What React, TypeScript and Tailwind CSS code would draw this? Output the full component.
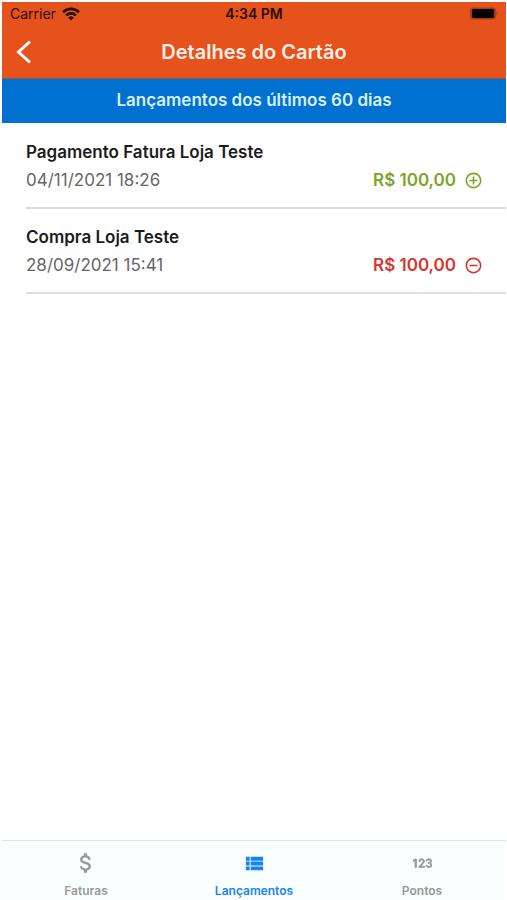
import { useState } from "react";
import { Bs123 } from "react-icons/bs";
import { MdAttachMoney, MdControlPoint, MdRemoveCircleOutline, MdViewList } from "react-icons/md";
import { clsx } from "clsx";

const entries = [
  { id: 1, title: "Pagamento Fatura Loja Teste", date: "04/11/2021 18:26", amount: "R$ 100,00", credit: true },
  { id: 2, title: "Compra Loja Teste", date: "28/09/2021 15:41", amount: "R$ 100,00", credit: false },
];

const tabs = [
  { name: "Faturas", icon: MdAttachMoney, size: 26, stroke: 0 },
  { name: "Lançamentos", icon: MdViewList, size: 23, stroke: 0 },
  { name: "Pontos", icon: Bs123, size: 19, stroke: 0.7 },
];

function StatusBar() {
  return (
    <div className="grid grid-cols-3 items-center h-6 px-2 text-[#2a0f05]">
      <div className="flex items-center gap-1.5 text-sm">
        Carrier
        <svg width="18" height="14" viewBox="0 0 18 14" fill="none" stroke="currentColor" strokeWidth="2.6">
          <path d="M1 5.2a11.4 11.4 0 0 1 16 0" />
          <path d="M4 8.4a7.2 7.2 0 0 1 10 0" />
          <path d="M9 13.6 6.2 10.7a4 4 0 0 1 5.6 0Z" fill="currentColor" stroke="none" />
        </svg>
      </div>
      <div className="text-sm font-semibold text-center">4:34 PM</div>
      <svg className="justify-self-end" width="29" height="14" viewBox="0 0 29 14">
        <rect x="1" y="0.5" width="26" height="12" rx="3.5" fill="#a93a12" />
        <rect x="3" y="2" width="22" height="9" rx="1.5" fill="#000" />
        <path d="M27.5 4.5c1.5.5 1.5 3.5 0 4Z" fill="#a93a12" />
      </svg>
    </div>
  );
}

export default function App() {
  const [active, setActive] = useState("Lançamentos");

  return (
    <div className="min-h-screen flex flex-col bg-white pt-0.5 pl-0.5 pr-px pb-px font-['Inter','Liberation_Sans',sans-serif]">
      <header className="bg-[#e6521c] border-b border-[#a5562f]">
        <StatusBar />
        <div className="grid grid-cols-[48px_1fr_48px] items-center h-13">
          <button type="button" aria-label="Voltar" className="flex pl-3 text-white">
            <svg width="18" height="26" viewBox="0 0 18 26" fill="none" stroke="currentColor" strokeWidth="3">
              <path d="M16 2.5 4.5 13 16 23.5" />
            </svg>
          </button>
          <h1 className="text-xl font-semibold text-center text-[#fff0e8]">Detalhes do Cartão</h1>
        </div>
      </header>

      <h2 className="h-11 flex items-center justify-center bg-[#0071d0] text-[17px] font-semibold text-[#d9efff]">
        Lançamentos dos últimos 60 dias
      </h2>

      <main className="flex-1 pl-6 pt-px">
        <ul>
          {entries.map((entry) => {
            const Icon = entry.credit ? MdControlPoint : MdRemoveCircleOutline;
            return (
              <li key={entry.id} className="pt-4 pb-[15px] pr-[23px] border-b-2 border-[#dedede]">
                <h3 className="text-[17px] leading-6 font-semibold text-[#1c1c1c]">{entry.title}</h3>
                <div className="flex items-center justify-between pt-1 text-[17px] leading-6">
                  <time className="text-[#666666]">{entry.date}</time>
                  <div className={clsx("flex items-center gap-2 font-semibold", entry.credit ? "text-[#7ba428]" : "text-[#d8352c]")}>
                    {entry.amount}
                    <Icon size={19} />
                  </div>
                </div>
              </li>
            );
          })}
        </ul>
      </main>

      <nav className="grid grid-cols-3 h-[59px] bg-[#f9fefe] border-t border-[#dfe3e3]">
        {tabs.map((tab) => (
          <button
            key={tab.name}
            type="button"
            onClick={() => setActive(tab.name)}
            className={clsx(
              "flex flex-col items-center justify-between pt-1.5 text-xs leading-4 font-semibold",
              active === tab.name ? "text-[#1683f5]" : "text-[#969a9a]"
            )}
          >
            <span className="flex items-center justify-center h-8">
              <tab.icon size={tab.size} strokeWidth={tab.stroke} />
            </span>
            {tab.name}
          </button>
        ))}
      </nav>
    </div>
  );
}
